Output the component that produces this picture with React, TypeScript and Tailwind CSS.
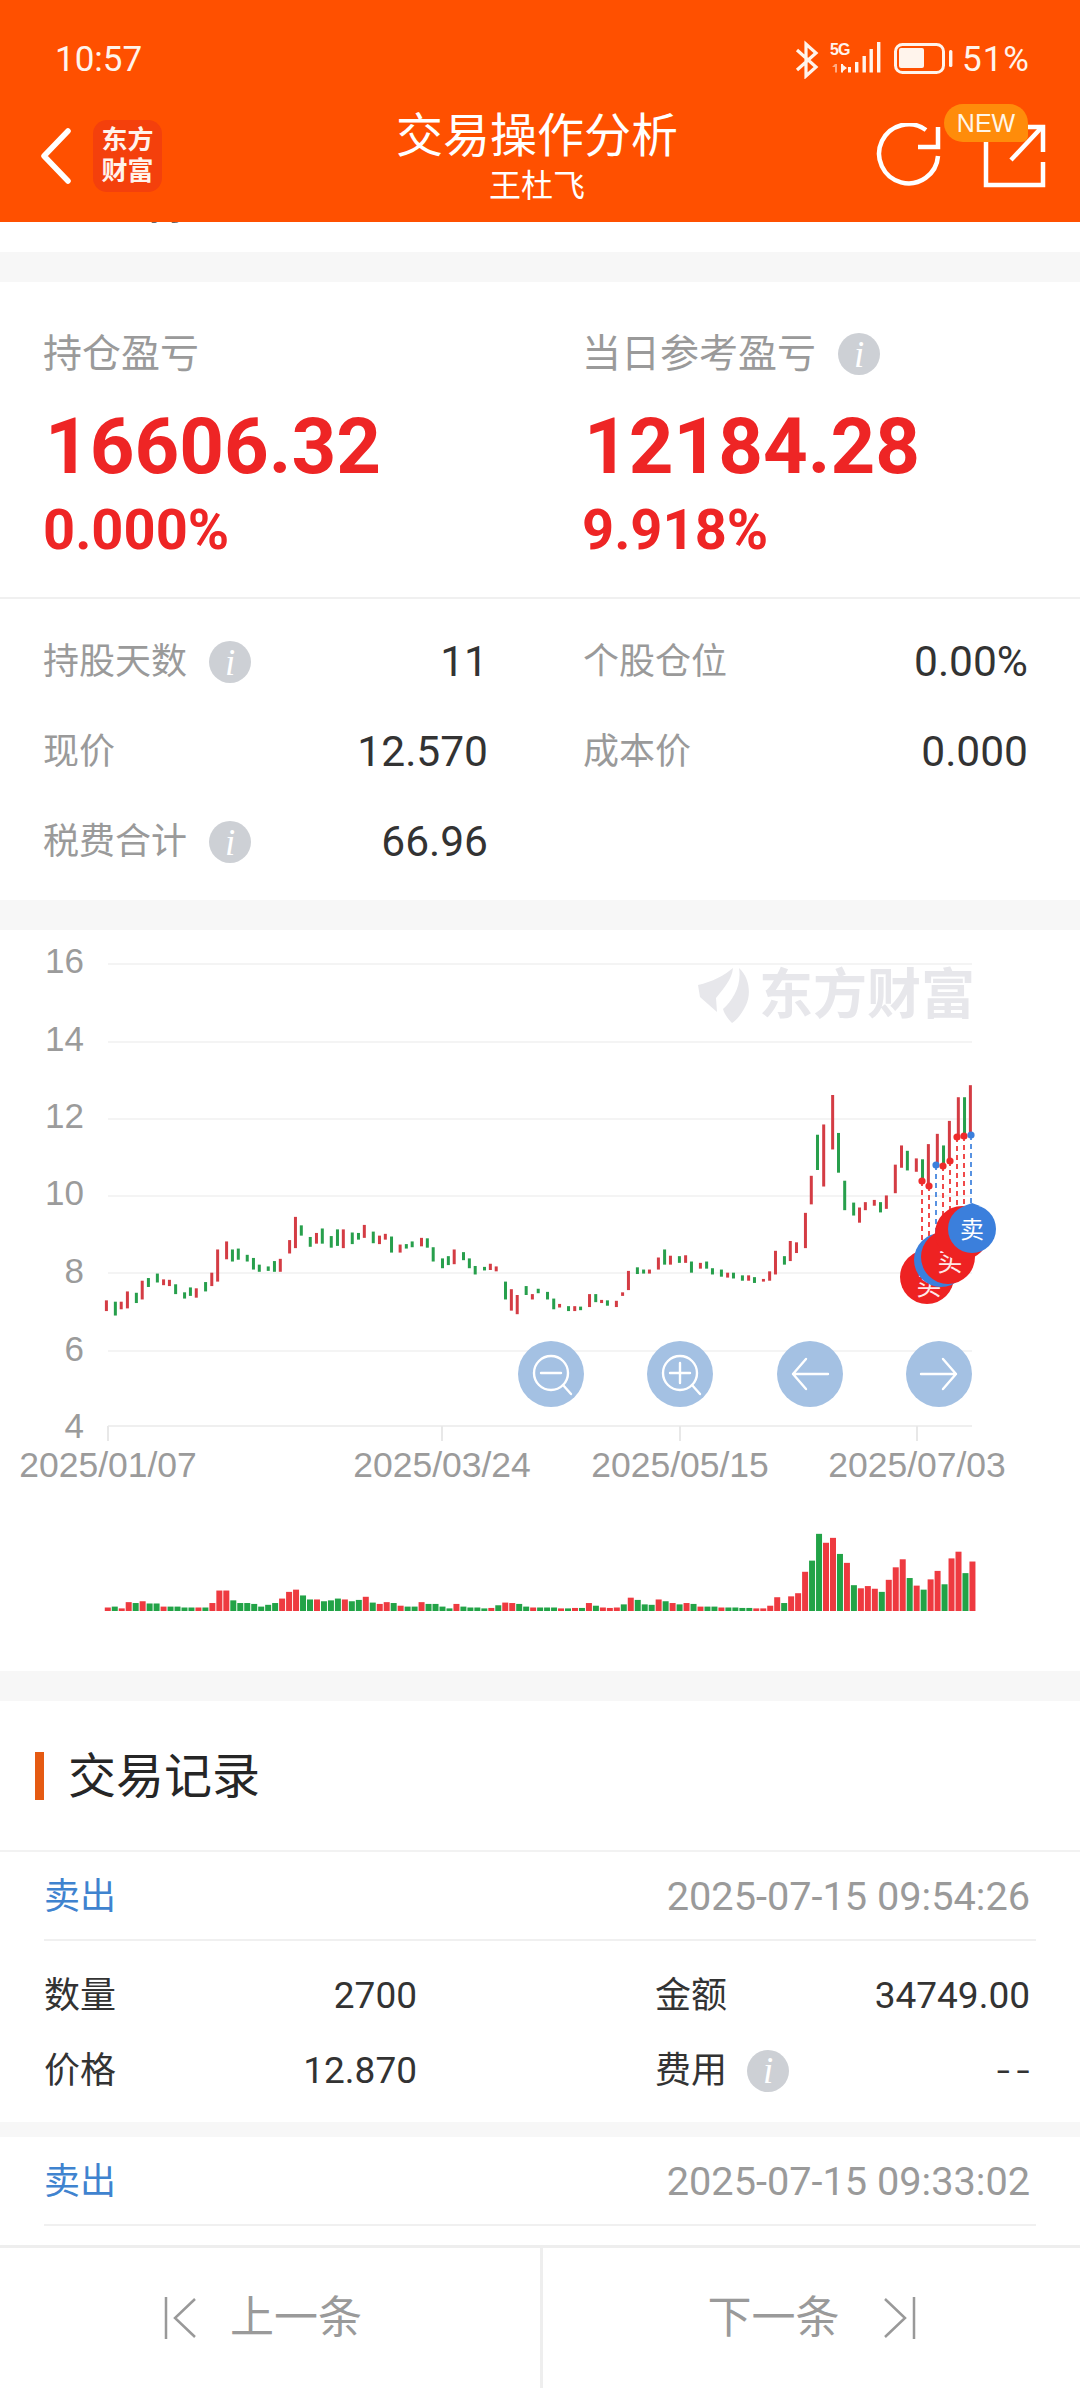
import React from "react";

const CJK = "font-['Roboto','Noto_Sans_CJK_SC',sans-serif]";

const candleText =
  "309,852,876,r 335,855,886,g 352,855,872,r 370,832,870,r 396,835,858,g 413,808,850,r 431,802,822,g 457,792,812,g 475,805,818,r 492,806,820,r 510,816,838,g 536,834,848,g 553,823,842,g 570,825,846,r 597,811,832,g 615,790,820,r 632,738,810,r 658,720,760,r 675,738,765,g 692,736,761,g 718,750,765,g 736,757,783,g 753,772,788,g 779,776,786,g 797,764,788,g 814,759,788,r 841,717,747,r 858,665,735,r 875,684,707,g 901,710,732,g 919,701,725,r 936,691,725,g 962,708,734,g 980,693,730,g 997,693,735,r 1023,700,726,g 1041,701,716,g 1058,683,712,r 1084,698,724,g 1102,707,726,r 1119,703,716,r 1137,709,745,g 1162,727,745,r 1180,726,736,g 1197,720,733,g 1224,712,731,r 1241,713,734,g 1258,733,765,g 1285,758,780,g 1302,753,773,g 1319,738,771,r 1346,744,762,g 1363,758,780,g 1380,775,794,g 1407,777,785,g 1424,770,784,r 1441,776,787,r 1468,810,850,g 1485,827,875,r 1502,840,883,r 1528,820,840,g 1546,838,850,r 1563,826,836,g " +
  "1590,833,850,g 1608,848,872,g 1625,860,868,r 1651,865,876,g 1669,865,876,r 1686,866,874,g 1712,838,867,r 1730,838,856,g 1747,851,858,r 1764,852,864,g 1790,853,867,r 1808,834,842,r 1825,786,829,r 1851,778,793,g 1869,783,792,g 1886,783,792,r 1912,756,783,r 1930,738,772,g 1947,752,772,r 1973,753,768,g 1991,751,768,r 2008,765,790,g 2034,768,781,r 2052,765,781,g 2069,780,794,g 2095,783,799,g 2113,790,801,r 2130,790,803,g 2156,796,808,g 2174,796,808,r 2191,800,813,g 2217,804,810,r 2235,787,808,r 2252,741,794,r 2278,753,772,g 2295,719,764,r 2313,722,746,r 2339,656,735,r 2356,573,637,r 2374,481,560,g 2392,458,597,r 2418,392,514,r 2435,477,566,g 2453,584,650,g 2479,633,662,g 2496,644,678,r 2513,632,650,r 2539,627,640,r 2557,632,655,g 2574,617,647,r 2600,548,612,r 2618,505,555,r 2635,517,561,g 2661,534,564,r 2679,536,590,g 2696,502,600,r 2722,479,545,r 2740,505,550,g 2757,450,540,r 2783,397,490,r 2801,397,485,g 2818,370,480,r";

const candles = candleText.split(" ").map((s) => {
  const [x, a, b, c] = s.split(",");
  return {
    x: Number(x) / 2.904,
    top: 920 + Number(a) / 2.24,
    bottom: 920 + Number(b) / 2.24,
    red: c === "r",
  };
});

const volumeText =
  "r1540 g1538 r1542 r1528 g1530 r1526 g1531 g1531 r1538 g1538 g1538 g1540 g1540 r1540 g1540 r1530 r1502 r1502 g1524 g1530 g1530 g1532 g1538 g1534 g1530 r1520 r1505 r1500 g1513 g1522 r1522 g1526 g1524 g1520 r1522 g1526 g1523 r1516 g1529 r1532 r1528 g1530 r1536 g1538 g1538 r1528 g1532 g1532 g1538 g1542 r1532 g1538 g1540 g1540 g1542 r1541 g1535 r1529 r1530 g1532 g1538 r1540 g1540 g1540 g1540 r1542 g1542 r1541 g1541 r1530 g1536 r1540 r1541 r1540 g1533 r1518 g1523 g1533 g1534 r1522 g1526 r1530 g1533 r1530 g1532 r1538 g1538 g1538 r1540 g1540 g1540 g1541 g1541 r1542 r1542 r1536 r1517 g1530 r1515 r1508 r1460 g1435 g1375 r1395 r1384 g1420 r1440 g1490 r1497 r1492 r1498 g1505 r1478 r1450 r1432 g1474 r1491 g1500 r1477 r1458 g1488 r1430 r1415 g1463 r1437";

const volumes = volumeText.split(" ").map((s, i) => ({
  x: (313 + 20.25 * i) / 2.904,
  top: 920 + Number(s.slice(1)) / 2.24,
  red: s[0] === "r",
}));

const gridY = [964, 1042, 1119, 1196, 1273, 1351];
const yLabels = [
  ["16", 973],
  ["14", 1051],
  ["12", 1128],
  ["10", 1205],
  ["8", 1283],
  ["6", 1361],
  ["4", 1438],
] as const;
const xLabels = [
  ["2025/01/07", 108],
  ["2025/03/24", 442],
  ["2025/05/15", 680],
  ["2025/07/03", 917],
] as const;

const dots = [
  [922, 1181, "#ee2b2b"],
  [929, 1186, "#ee2b2b"],
  [936, 1165, "#3b7fdc"],
  [943, 1166, "#ee2b2b"],
  [950, 1161, "#ee2b2b"],
  [957, 1137, "#ee2b2b"],
  [964, 1136, "#ee2b2b"],
  [971, 1135, "#3b7fdc"],
] as const;

function Info() {
  return (
    <span className="inline-flex h-[42px] w-[42px] shrink-0 items-center justify-center rounded-full bg-[#cdd0d5] font-['Liberation_Serif',serif] text-[37px] italic leading-none text-white">
      i
    </span>
  );
}

function Chart() {
  return (
    <svg viewBox="0 930 1080 741" className="block h-[741px] w-[1080px] bg-white">
      {gridY.map((y) => (
        <rect key={y} x={108} y={y - 1} width={864} height={2} fill="#f4f4f4" />
      ))}
      <rect x={108} y={1425} width={864} height={2} fill="#efefef" />
      {[108, 442, 680, 917].map((x) => (
        <rect key={x} x={x - 1} y={1426} width={2} height={15} fill="#e8e8e8" />
      ))}
      <g fill="#e7e7eb">
        <path d="M698 985C712 982 725 975 733 968C732 980 722 990 716 998L717 1012L700 997Z" />
        <path d="M739 968C750 978 751 995 746 1005C741 1016 735 1021 732 1023C727 1018 724 1013 723 1009C733 1000 742 985 739 968Z" />
        <text x={759} y={1014} fontSize={54} fontWeight={700} className="font-['Noto_Sans_CJK_SC',sans-serif]">
          东方财富
        </text>
      </g>
      {yLabels.map(([t, y]) => (
        <text key={t} x={84} y={y} textAnchor="end" fontSize={35} fill="#9b9b9b" className="font-['Liberation_Sans',sans-serif]">
          {t}
        </text>
      ))}
      {xLabels.map(([t, x]) => (
        <text key={t} x={x} y={1477} textAnchor="middle" fontSize={35.5} fill="#9b9b9b" className="font-['Liberation_Sans',sans-serif]">
          {t}
        </text>
      ))}
      {candles.map((c, i) => (
        <rect key={i} x={c.x - 1.5} y={c.top} width={3} height={c.bottom - c.top} fill={c.red ? "#d43c44" : "#279f4c"} />
      ))}
      {volumes.map((v, i) => (
        <rect key={i} x={v.x - 3} y={v.top} width={6} height={1611 - v.top} fill={v.red ? "#ee3a40" : "#22a347"} />
      ))}
      {dots.map(([x, y, c]) => (
        <g key={x}>
          <line x1={x} y1={y} x2={x} y2={1240} stroke={c} strokeWidth={2} strokeDasharray="5 4" opacity={0.85} />
          <circle cx={x} cy={y} r={3.6} fill={c} />
        </g>
      ))}
      <circle cx={927} cy={1277} r={27} fill="#ee2222" />
      <text x={929} y={1295} textAnchor="middle" fontSize={25} fill="#ffe9e9" className="font-['Noto_Sans_CJK_SC',sans-serif]">
        买
      </text>
      <circle cx={941} cy={1260} r={27} fill="#3b7fdc" />
      <circle cx={948} cy={1257} r={27} fill="#ee2222" />
      <text x={950} y={1271} textAnchor="middle" fontSize={25} fill="#ffe9e9" className="font-['Noto_Sans_CJK_SC',sans-serif]">
        买
      </text>
      <circle cx={962} cy={1233} r={27} fill="#ee2222" />
      <path d="M964 1206L972 1203L980 1206Z" fill="#3b7fdc" />
      <circle cx={972} cy={1229} r={24} fill="#3b7fdc" />
      <text x={972} y={1238} textAnchor="middle" fontSize={24} fill="#ffffff" className="font-['Noto_Sans_CJK_SC',sans-serif]">
        卖
      </text>
      {[551, 680, 810, 939].map((x) => (
        <ellipse key={x} cx={x} cy={1374} rx={33} ry={33} fill="#a4c1e3" />
      ))}
      <g fill="none" stroke="#ffffff" strokeWidth={2.4} strokeLinecap="round" strokeLinejoin="round">
        <circle cx={551} cy={1373} r={17} />
        <path d="M541 1373H561M563 1385L571 1394" />
        <circle cx={680} cy={1373} r={17} />
        <path d="M670 1373H690M680 1363V1383M692 1385L700 1394" />
        <path d="M793 1374H828M806 1359L793 1374L806 1389" />
        <path d="M921 1374H956M943 1359L956 1374L943 1389" />
      </g>
    </svg>
  );
}

function Stat({ label, info, value, pct }: { label: string; info?: boolean; value: string; pct: string }) {
  return (
    <div className="flex flex-col">
      <div className="flex h-[46px] items-center gap-[22px] pt-[2px] text-[39px] leading-none text-[#9a9a9a]">
        <span>{label}</span>
        {info && <Info />}
      </div>
      <div className="mt-[33px] h-[76px] pl-[2px] text-[78px] font-bold leading-[76px] text-[#ee2525]">{value}</div>
      <div className="mt-[15px] text-[56px] font-bold leading-[60px] text-[#ee2525]">{pct}</div>
    </div>
  );
}

function DataRow({ label, info, value }: { label: string; info?: boolean; value?: string }) {
  return (
    <div className="flex h-[90px] items-center justify-between">
      <div className="flex items-center gap-[22px] pt-[2px] text-[36px] text-[#9a9a9a]">
        <span>{label}</span>
        {info && <Info />}
      </div>
      {value && <span className="pt-[2px] text-[42.5px] text-[#333333]">{value}</span>}
    </div>
  );
}

function TradeHead({ time }: { time: string }) {
  return (
    <div className="mx-[44px] flex h-[89px] items-center justify-between border-b-2 border-[#f0f0f0] pt-[2px]">
      <span className="text-[36px] text-[#3f83cf]">卖出</span>
      <span className="pr-[6px] text-[39.7px] text-[#9a9a9a]">{time}</span>
    </div>
  );
}

function TradeCell({ label, value, info, dash }: { label: string; value: string; info?: boolean; dash?: boolean }) {
  return (
    <div className="flex h-[75px] items-center justify-between">
      <div className="flex items-center gap-[20px] text-[36px] text-[#333333]">
        <span>{label}</span>
        {info && <Info />}
      </div>
      <span className={dash ? "mr-[-6px] text-[48px] font-light leading-none tracking-[6px] text-[#333333]" : "text-[37px] text-[#333333]"}>{value}</span>
    </div>
  );
}

export default function App() {
  return (
    <div className={`flex h-[2388px] w-[1080px] flex-col overflow-hidden bg-white ${CJK}`}>
      <header className="h-[222px] shrink-0 bg-[#ff5000] text-white">
        <div className="flex h-[100px] items-center justify-between pl-[55px] pr-[50px] pt-[18px]">
          <span className="text-[35px] leading-none text-[#fff4ec]">10:57</span>
          <div className="flex items-center">
            <div className="relative h-[40px] w-[164px]">
              <svg width="164" height="40" viewBox="795 40 164 40" className="absolute left-0 top-0">
                <path d="M798 51L817 68L807 77V45L817 54L798 71" fill="none" stroke="#fff4ec" strokeWidth="3.2" />
                <g fill="#fff4ec">
                  <rect x="849" y="68" width="3" height="5.5" />
                  <rect x="856" y="63" width="3.4" height="10.5" />
                  <rect x="863.5" y="57" width="3.4" height="16.5" />
                  <rect x="870.5" y="50" width="3.4" height="23.5" />
                  <rect x="878" y="43" width="3.4" height="30.5" />
                  <path d="M842 65h2v8.5h-2zM844 66l4 3-4 3z" />
                  <path d="M836 65h2v8.5h-2zM833 68l3-3v3z" opacity=".55" />
                  <rect x="900" y="49" width="25" height="20" rx="2" />
                  <rect x="950" y="51" width="3.4" height="17" rx="1.5" />
                </g>
                <rect x="896.5" y="45.5" width="48" height="28" rx="7" fill="none" stroke="#fff4ec" strokeWidth="3" />
              </svg>
              <span className="absolute left-[36px] top-[3px] font-['Liberation_Sans',sans-serif] text-[16px] font-bold leading-none tracking-[-1px] text-[#fff4ec]">
                5G
              </span>
            </div>
            <span className="ml-[4px] text-[35px] leading-none tracking-[1px] text-[#fff4ec]">51%</span>
          </div>
        </div>
        <div className="grid h-[122px] grid-cols-[1fr_auto_1fr] items-center pb-[10px]">
          <div className="flex items-center pl-[40px]">
            <svg width="32" height="56" viewBox="0 0 32 56" fill="none" stroke="#ffffff" strokeWidth="5.5" strokeLinecap="round" strokeLinejoin="round">
              <path d="M28 3L4 28L28 53" />
            </svg>
            <div className="ml-[21px] flex h-[72px] w-[69px] flex-col items-center justify-center rounded-[14px] bg-[#f4400c] text-[26px] font-bold leading-[31px] text-[#fff3ec]">
              <span>东方</span>
              <span>财富</span>
            </div>
          </div>
          <div className="flex flex-col items-center pr-[6px]">
            <span className="text-[47px] leading-[56px]">交易操作分析</span>
            <span className="mt-[4px] text-[32px] leading-[36px]">王杜飞</span>
          </div>
          <div className="relative flex items-center justify-end pr-[33px]">
            <svg width="68" height="66" viewBox="875 122 68 66" fill="none" stroke="#ffffff" strokeWidth="4.5">
              <path d="M926 129A29.5 29.5 0 1 0 938 155" />
              <path d="M938 126V146H918" />
            </svg>
            <svg width="66" height="66" viewBox="982 123 66 66" fill="none" stroke="#ffffff" strokeWidth="4.5" className="ml-[38px]">
              <path d="M987 141V185H1044V162" />
              <path d="M1012 160L1043 127" />
              <path d="M1021 127H1044V152" />
            </svg>
            <span className="absolute right-[52px] top-[-19px] flex h-[38px] w-[84px] items-center justify-center rounded-t-[19px] rounded-bl-[19px] rounded-br-[6px] bg-[#ff8c0a] font-['Liberation_Sans',sans-serif] text-[25px] leading-none text-[#fff6e8]">
              NEW
            </span>
          </div>
        </div>
      </header>

      <main className="flex min-h-0 flex-1 flex-col overflow-hidden">
        <div className="h-[30px] shrink-0 overflow-hidden pl-[104px]">
          <div className="-mt-[33px] text-[36px] leading-[38px] text-[#666666]">● 持仓盈</div>
        </div>
        <div className="h-[30px] shrink-0 bg-[#f7f7f7]" />

        <section className="h-[618px] shrink-0">
          <div className="grid h-[317px] grid-cols-[539px_1fr] border-b-2 border-[#f0f0f0] pl-[43px] pt-[48px]">
            <Stat label="持仓盈亏" value="16606.32" pct="0.000%" />
            <Stat label="当日参考盈亏" info value="12184.28" pct="9.918%" />
          </div>
          <div className="grid grid-cols-[445px_445px] gap-x-[95px] pl-[43px] pt-[17px]">
            <DataRow label="持股天数" info value="11" />
            <DataRow label="个股仓位" value="0.00%" />
            <DataRow label="现价" value="12.570" />
            <DataRow label="成本价" value="0.000" />
            <DataRow label="税费合计" info value="66.96" />
          </div>
        </section>

        <div className="h-[30px] shrink-0 bg-[#f7f7f7]" />
        <Chart />
        <div className="h-[30px] shrink-0 bg-[#f7f7f7]" />

        <section className="shrink-0">
          <div className="flex h-[149px] items-center pl-[35px]">
            <span className="h-[48px] w-[9px] bg-[#e55a12]" />
            <span className="ml-[24px] pt-[2px] text-[48px] text-[#262626]">交易记录</span>
          </div>
          <div className="border-t-2 border-[#f2f2f2]">
            <TradeHead time="2025-07-15 09:54:26" />
            <div className="grid grid-cols-[373px_375px] gap-x-[238px] pl-[44px] pt-[17px]">
              <TradeCell label="数量" value="2700" />
              <TradeCell label="金额" value="34749.00" />
              <TradeCell label="价格" value="12.870" />
              <TradeCell label="费用" info dash value="--" />
            </div>
          </div>
        </section>
        <div className="mt-[14px] h-[15px] shrink-0 bg-[#f7f7f7]" />
        <TradeHead time="2025-07-15 09:33:02" />
      </main>

      <footer className="flex h-[143px] shrink-0 border-t-[3px] border-[#eeeeee] text-[44px] text-[#9a9a9a]">
        <div className="flex w-[540px] items-center justify-center pr-[14px]">
          <svg width="32" height="42" viewBox="0 0 32 42" fill="none" stroke="#999999" strokeWidth="2.5">
            <path d="M2 0V42M31 2L11 21L31 40" />
          </svg>
          <span className="ml-[34px]">上一条</span>
        </div>
        <div className="flex flex-1 items-center justify-center border-l-[3px] border-[#eeeeee]">
          <span className="mr-[44px]">下一条</span>
          <svg width="32" height="42" viewBox="0 0 32 42" fill="none" stroke="#999999" strokeWidth="2.5">
            <path d="M30 0V42M1 2L21 21L1 40" />
          </svg>
        </div>
      </footer>
    </div>
  );
}
